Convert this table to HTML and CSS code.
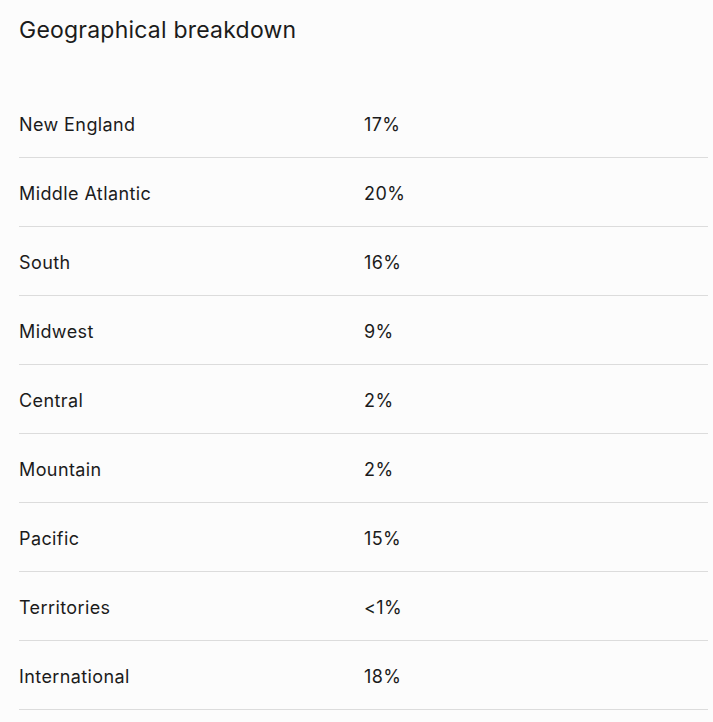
FILE: index.html
```html
<!DOCTYPE html>
<html>
<head>
<meta charset="utf-8">
<link rel="stylesheet" href="styles.css">
</head>
<body>
<section class="geo">
  <h2 class="geo-title">Geographical breakdown</h2>
  <div class="geo-table">
    <div class="geo-row"><span class="geo-name">New England</span><span class="geo-val">17%</span></div>
    <div class="geo-row"><span class="geo-name">Middle Atlantic</span><span class="geo-val">20%</span></div>
    <div class="geo-row"><span class="geo-name">South</span><span class="geo-val">16%</span></div>
    <div class="geo-row"><span class="geo-name">Midwest</span><span class="geo-val">9%</span></div>
    <div class="geo-row"><span class="geo-name">Central</span><span class="geo-val">2%</span></div>
    <div class="geo-row"><span class="geo-name">Mountain</span><span class="geo-val">2%</span></div>
    <div class="geo-row"><span class="geo-name">Pacific</span><span class="geo-val">15%</span></div>
    <div class="geo-row"><span class="geo-name">Territories</span><span class="geo-val">&lt;1%</span></div>
    <div class="geo-row"><span class="geo-name">International</span><span class="geo-val">18%</span></div>
  </div>
</section>
</body>
</html>
```

FILE: styles.css
```css
html, body {
  margin: 0;
  padding: 0;
  background: #fcfcfc;
}
body {
  font-family: "Inter", "Liberation Sans", sans-serif;
  color: #1b1b1b;
}
.geo {
  padding: 0 5px 0 19px;
}
.geo-title {
  margin: 0;
  height: 89px;
  padding-top: 14px;
  box-sizing: border-box;
  font-size: 23px;
  font-weight: 400;
  line-height: 32px;
  letter-spacing: 0.22px;
}
.geo-row {
  display: grid;
  grid-template-columns: 345px 1fr;
  align-items: center;
  height: 69px;
  box-sizing: border-box;
  border-bottom: 1px solid #dcdcdc;
  font-size: 18px;
  letter-spacing: 0.4px;
  padding-top: 2px;
}
```
